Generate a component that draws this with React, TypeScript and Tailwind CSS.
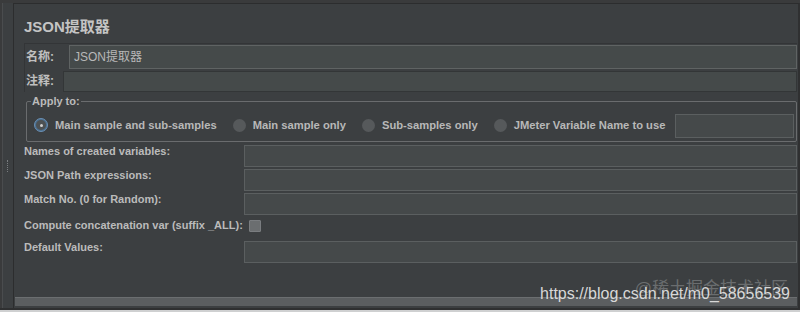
import React from 'react'

const font = { fontFamily: '"Liberation Sans", "Noto Sans CJK SC", Arial, sans-serif' }

function Field({ className = '' }: { className?: string }) {
  return <div className={`bg-[#45494a] border border-[#5b5f60] ${className}`} />
}

function Radio({ checked, label }: { checked?: boolean; label: string }) {
  return (
    <div className="flex items-center gap-[7px]">
      {checked ? (
        <div className="w-[14px] h-[14px] rounded-full bg-[#4a6d8c] border border-[#6a8fb3] flex items-center justify-center">
          <div className="w-[10px] h-[10px] rounded-full bg-[#4d5153] flex items-center justify-center">
            <div className="w-[3px] h-[3px] rounded-full bg-[#d0d0d0]" />
          </div>
        </div>
      ) : (
        <div className="w-[13px] h-[13px] rounded-full bg-[#56595b]" />
      )}
      <span className="text-[11.2px] font-bold text-[#b8b8b8]">{label}</span>
    </div>
  )
}

const rows = [
  'Names of created variables:',
  'JSON Path expressions:',
  'Match No. (0 for Random):',
]

export default function App() {
  return (
    <div style={font} className="relative w-[800px] h-[312px] bg-[#3a3b3c] overflow-hidden flex flex-col">
      <div className="flex flex-1 min-h-0 pt-[3px]">
        {/* left splitter strip */}
        <div className="w-[14px] flex border-r border-[#2c2d2e]">
          <div className="w-[3px] bg-[#3a3b3c] border-r border-[#4a4c4e]" />
          <div className="flex-1 bg-[#3c3f41] flex flex-col items-center pt-[157px]">
            <div className="w-[2px] h-[12px] border-l border-dotted border-[#7a7d80]" />
          </div>
        </div>

        {/* main panel */}
        <div className="flex-1 flex flex-col bg-[#3c3f41] border-t border-[#2c2d2e] border-r-2 border-r-[#2f3031] pl-[10px] pr-[1px]">
          <div className="h-[37px] pt-[13px] text-[15px] font-bold text-[#c4c4c4] leading-[20px]">JSON提取器</div>

          <div className="border-t border-l border-[#333537] mt-[2px]">
            <div className="flex items-center h-[26px]">
              <span className="w-[44px] pl-[1px] text-[12px] font-bold text-[#c0c0c0]">名称:</span>
              <div className="flex-1 h-[24px] bg-[#454a4a] border border-[#5f6363] flex items-center pl-[4px] text-[12px] text-[#b8b8b8]">
                JSON提取器
              </div>
            </div>
            <div className="flex items-center h-[22px]">
              <span className="w-[38px] pl-[1px] text-[12px] font-bold text-[#c0c0c0]">注释:</span>
              <div className="flex-1 h-[21px] bg-[#454a4a] border border-[#333637]" />
            </div>
          </div>

          <div className="relative mt-[9px] ml-[2px] h-[41px] border border-[#6a6c6e] rounded-[2px] flex items-center pt-[8px] pl-[7px] gap-[16px]">
            <span className="absolute -top-[8px] left-[4px] px-[1px] bg-[#3c3f41] text-[11px] font-bold text-[#bbbbbb] leading-[14px]">Apply to:</span>
            <Radio checked label="Main sample and sub-samples" />
            <Radio label="Main sample only" />
            <Radio label="Sub-samples only" />
            <Radio label="JMeter Variable Name to use" />
            <Field className="flex-1 h-[24px] mr-[2px] ml-[-6px]" />
          </div>

          <div className="flex flex-col mt-[3px] gap-[2px]">
            {rows.map((r) => (
              <div key={r} className="flex items-start h-[22px]">
                <span className="w-[220px] text-[11px] font-bold text-[#bbbbbb] leading-[13px]">{r}</span>
                <Field className="flex-1 h-[22px]" />
              </div>
            ))}
            <div className="flex items-start h-[22px]">
              <span className="text-[11px] font-bold text-[#bbbbbb] leading-[13px] pt-[2px]">Compute concatenation var (suffix _ALL):</span>
              <div className="ml-[6px] mt-[3px] w-[12px] h-[12px] bg-[#6b6e70] border border-[#7a7d80] rounded-[1px]" />
            </div>
            <div className="flex items-start h-[22px]">
              <span className="w-[220px] text-[11px] font-bold text-[#bbbbbb] leading-[13px]">Default Values:</span>
              <Field className="flex-1 h-[22px]" />
            </div>
          </div>

          <div className="flex-1" />
          <div className="h-[9px] -ml-[9px] bg-[#5b5e60] border-t border-[#6b6e70] mb-[2px]" />
        </div>
      </div>
      <div className="h-[4px] bg-[#2f3031] border-b-2 border-[#cfd0d1]" />

      {/* watermark */}
      <div className="absolute right-[12px] bottom-[14px] text-[17px] text-[#8a8d8e] opacity-60 leading-[18px]">@稀土掘金技术社区</div>
      <div className="absolute right-[10px] bottom-[9px] text-[16px] text-[#d8d8d8] leading-[18px]">https://blog.csdn.net/m0_58656539</div>
    </div>
  )
}
